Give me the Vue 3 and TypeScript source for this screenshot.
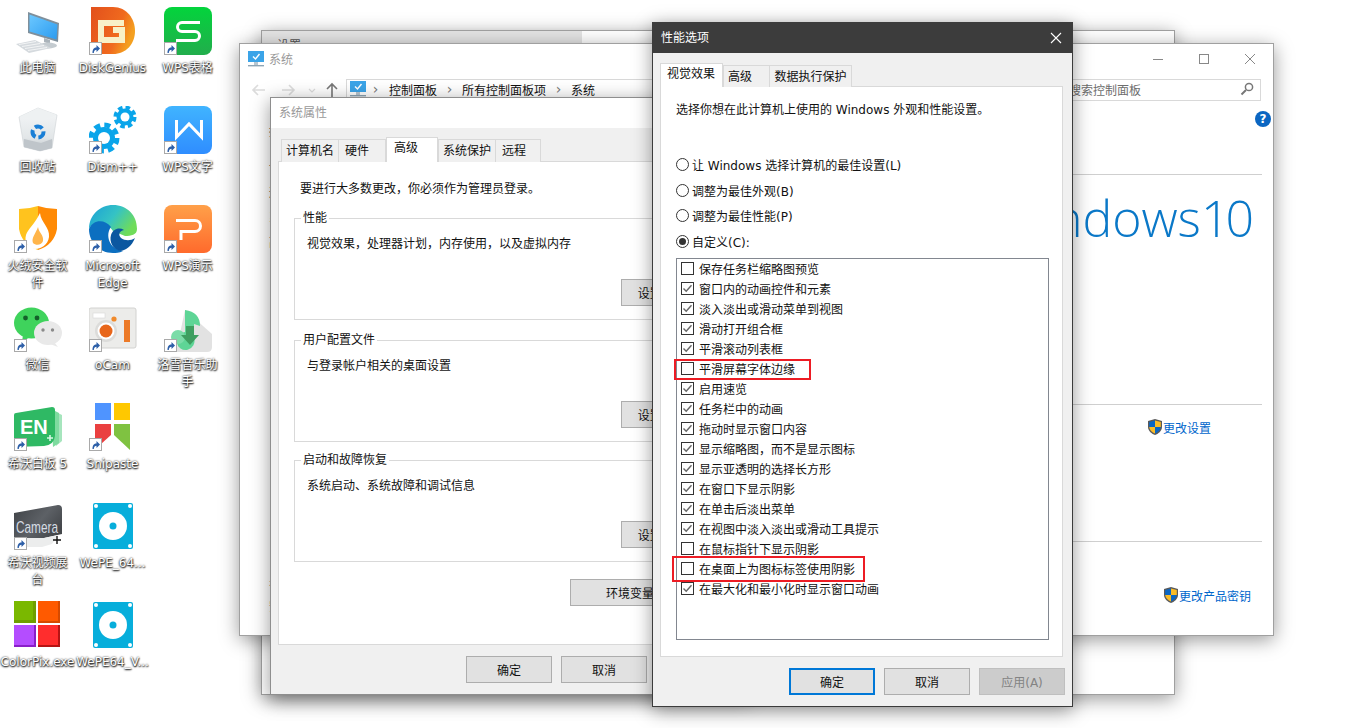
<script setup lang="ts">
interface DeskItem {
  label: string
  icon: string
  shortcut: boolean
}

// 桌面图标，按列从上到下排
const desktopItems: DeskItem[] = [
  { label: '此电脑', icon: 'pc', shortcut: false },
  { label: '回收站', icon: 'bin', shortcut: false },
  { label: '火绒安全软\n件', icon: 'huorong', shortcut: true },
  { label: '微信', icon: 'wechat', shortcut: true },
  { label: '希沃白板 5', icon: 'en', shortcut: true },
  { label: '希沃视频展\n台', icon: 'camera', shortcut: true },
  { label: 'ColorPix.exe', icon: 'colorpix', shortcut: false },
  { label: 'DiskGenius', icon: 'disk', shortcut: true },
  { label: 'Dism++', icon: 'dism', shortcut: true },
  { label: 'Microsoft\nEdge', icon: 'edge', shortcut: true },
  { label: 'oCam', icon: 'ocam', shortcut: true },
  { label: 'Snipaste', icon: 'snipaste', shortcut: true },
  { label: 'WePE_64...', icon: 'wepe', shortcut: false },
  { label: 'WePE64_V...', icon: 'wepe', shortcut: false },
  { label: 'WPS表格', icon: 'wpsS', shortcut: true },
  { label: 'WPS文字', icon: 'wpsW', shortcut: true },
  { label: 'WPS演示', icon: 'wpsP', shortcut: true },
  { label: '洛雪音乐助\n手', icon: 'lx', shortcut: true }
]

const radios = [
  { label: '让 Windows 选择计算机的最佳设置(L)', on: false },
  { label: '调整为最佳外观(B)', on: false },
  { label: '调整为最佳性能(P)', on: false },
  { label: '自定义(C):', on: true }
]

const effects = [
  { label: '保存任务栏缩略图预览', on: false },
  { label: '窗口内的动画控件和元素', on: true },
  { label: '淡入淡出或滑动菜单到视图', on: true },
  { label: '滑动打开组合框', on: true },
  { label: '平滑滚动列表框', on: true },
  { label: '平滑屏幕字体边缘', on: false },
  { label: '启用速览', on: true },
  { label: '任务栏中的动画', on: true },
  { label: '拖动时显示窗口内容', on: true },
  { label: '显示缩略图，而不是显示图标', on: true },
  { label: '显示亚透明的选择长方形', on: true },
  { label: '在窗口下显示阴影', on: true },
  { label: '在单击后淡出菜单', on: true },
  { label: '在视图中淡入淡出或滑动工具提示', on: true },
  { label: '在鼠标指针下显示阴影', on: false },
  { label: '在桌面上为图标标签使用阴影', on: false },
  { label: '在最大化和最小化时显示窗口动画', on: true }
]

const propTabs = ['计算机名', '硬件', '高级', '系统保护', '远程']
const perfTabs = ['视觉效果', '高级', '数据执行保护']

const groups = [
  { title: '性能', desc: '视觉效果，处理器计划，内存使用，以及虚拟内存' },
  { title: '用户配置文件', desc: '与登录帐户相关的桌面设置' },
  { title: '启动和故障恢复', desc: '系统启动、系统故障和调试信息' }
]
</script>

<template>
  <div class="screen">
    <!-- 桌面图标 -->
    <div class="desktop">
      <div v-for="(item, i) in desktopItems" :key="i" class="desk-item">
        <div class="desk-icon">
          <svg viewBox="0 0 48 48" width="48" height="48">
            <template v-if="item.icon === 'pc'">
              <defs>
                <linearGradient id="pcScreen" x1="0" y1="0" x2="1" y2="1">
                  <stop offset="0" stop-color="#6cc8ff" />
                  <stop offset="1" stop-color="#2b9bef" />
                </linearGradient>
              </defs>
              <polygon points="14,5 45,16 44,35 14,26" fill="#7f8f9b" />
              <polygon points="15.5,7.5 43.5,17.5 42.5,32.5 15.5,24.5" fill="url(#pcScreen)" />
              <polygon points="30,31 36,33 36,37 30,35" fill="#aab3ba" />
              <ellipse cx="34" cy="38.5" rx="9" ry="3" fill="#c4cbd0" />
              <polygon points="2,37 21,33 37,41 15,46" fill="#d5dade" />
              <path d="M5 37.5 L22 34.5 M8 39.5 L26 36.5 M11 41.5 L30 38.5 M14 43.5 L33 40.5" stroke="#f5f6f7" stroke-width="0.9" />
            </template>

            <template v-else-if="item.icon === 'bin'">
              <defs>
                <linearGradient id="binBody" x1="0" y1="0" x2="0" y2="1">
                  <stop offset="0" stop-color="#f5f7f8" />
                  <stop offset="0.7" stop-color="#e2e6e8" />
                  <stop offset="1" stop-color="#b9c0c5" />
                </linearGradient>
              </defs>
              <polygon points="5,11 24,2 43,9 38,42 26,45 10,41" fill="url(#binBody)" stroke="#cdd2d5" stroke-width="0.6" />
              <polygon points="5,11 24,2 43,9 27,15" fill="#eef1f2" />
              <polygon points="10,33 27,37 38,33 38,42 26,45 10,41" fill="#bfc5ca" />
              <circle cx="24" cy="26" r="5.5" fill="none" stroke="#1a7fd6" stroke-width="4" stroke-dasharray="8 3" />
            </template>

            <template v-else-if="item.icon === 'huorong'">
              <path d="M5 4 Q15 4 24 1 V45 Q8 40 5 24 Z" fill="#ffc31e" />
              <path d="M43 4 Q33 4 24 1 V45 Q40 40 43 24 Z" fill="#ff8a05" />
              <path d="M26 8 C27 18 36 22 35 32 C34 40 27 44 21 44 C14 43 10 37 12 30 C14 24 20 20 26 8 Z" fill="#fff" />
              <path d="M24 22 C25 28 30 30 29 36 C28 40 22 41 19 38 C17 33 22 28 24 22 Z" fill="#ffb54a" />
            </template>

            <template v-else-if="item.icon === 'wechat'">
              <ellipse cx="17.5" cy="19" rx="17.5" ry="15.5" fill="#3fd35c" />
              <path d="M9 31 L8 38 L16 33 Z" fill="#3fd35c" />
              <circle cx="11.5" cy="14" r="2.4" fill="#14602a" />
              <circle cx="23" cy="14" r="2.4" fill="#14602a" />
              <ellipse cx="34" cy="29" rx="14" ry="12" fill="#e9e9e9" />
              <path d="M40 38 L44 43 L36 40 Z" fill="#e9e9e9" />
              <circle cx="29" cy="26" r="1.7" fill="#8a8a8a" />
              <circle cx="38.5" cy="26" r="1.7" fill="#8a8a8a" />
            </template>

            <template v-else-if="item.icon === 'en'">
              <path d="M40 8 L48 12 V38 L42 43 Z" fill="#a6e5bd" />
              <path d="M37 6 L45 10 V40 L39 44 Z" fill="#7edb9f" />
              <path d="M0 12 Q0 10 2 10 L38 4 Q41 4 41 7 V33 Q40 42 30 43 L0 44 Z" fill="#2fb964" />
              <text x="6" y="31" class="en-text">EN</text>
              <path d="M33 35 h6 M36 32 v6" stroke="#d9f5e3" stroke-width="1.6" />
            </template>

            <template v-else-if="item.icon === 'camera'">
              <defs>
                <linearGradient id="camBg" x1="0" y1="0" x2="1" y2="0.6">
                  <stop offset="0" stop-color="#3f4246" />
                  <stop offset="0.6" stop-color="#5d6166" />
                  <stop offset="1" stop-color="#44474b" />
                </linearGradient>
              </defs>
              <path d="M0 11 L44 3 Q48 3 48 7 V32 L30 36 H12 L0 38 Z" fill="url(#camBg)" />
              <path d="M12 36 H30 L44 33 L38 42 L28 45 H0 V38 Z" fill="#eceded" />
              <text x="2" y="31" class="cam-text" textLength="42" lengthAdjust="spacingAndGlyphs">Camera</text>
              <path d="M39 38 h8 M43 34 v8" stroke="#111" stroke-width="1.4" />
            </template>

            <template v-else-if="item.icon === 'colorpix'">
              <rect x="0" y="0" width="22" height="22" fill="#6f9f00" />
              <rect x="0" y="0" width="19" height="19" fill="#7ab800" />
              <rect x="24" y="0" width="22" height="22" fill="#d64a00" />
              <rect x="24" y="0" width="20" height="20" fill="#ff5a00" />
              <rect x="0" y="24" width="22" height="22" fill="#8a1fc8" />
              <rect x="0" y="24" width="20" height="20" fill="#b44dff" />
              <rect x="24" y="24" width="22" height="22" fill="#b51414" />
              <rect x="24" y="24" width="20" height="20" fill="#ff2d2d" />
            </template>

            <template v-else-if="item.icon === 'disk'">
              <defs>
                <linearGradient id="diskBg" x1="0" y1="0" x2="1" y2="0.4">
                  <stop offset="0" stop-color="#e2501c" />
                  <stop offset="0.7" stop-color="#f06a1e" />
                  <stop offset="1" stop-color="#f4a020" />
                </linearGradient>
              </defs>
              <path d="M2 0 H24 C38 0 46 12 46 24 C46 37 37 47 24 47 H2 Z" fill="url(#diskBg)" />
              <path d="M35 16 H12 V33 H33 V23 H24" fill="none" stroke="#f8f1c8" stroke-width="6" />
            </template>

            <template v-else-if="item.icon === 'dism'">
              <circle cx="15" cy="32" r="11" fill="#0aa5ea" />
              <circle cx="15" cy="32" r="13" fill="none" stroke="#0aa5ea" stroke-width="5" stroke-dasharray="6 4.2" />
              <circle cx="15" cy="32" r="6" fill="#fff" />
              <circle cx="36" cy="11" r="8.5" fill="#0aa5ea" />
              <circle cx="36" cy="11" r="9.5" fill="none" stroke="#0aa5ea" stroke-width="4" stroke-dasharray="4.5 3" />
              <circle cx="36" cy="11" r="4.5" fill="#fff" />
            </template>

            <template v-else-if="item.icon === 'edge'">
              <defs>
                <linearGradient id="edgeTop" x1="0" y1="0" x2="1" y2="0.5">
                  <stop offset="0" stop-color="#1a9fd8" />
                  <stop offset="0.55" stop-color="#35c3c4" />
                  <stop offset="1" stop-color="#6fdc5a" />
                </linearGradient>
              </defs>
              <path d="M0 24 C0 10 11 0 24 0 C38 0 48 10 48 24 C48 30 42 31 36 31 L24 26 C16 14 4 16 0 24 Z" fill="url(#edgeTop)" />
              <path d="M0 24 C4 14 16 14 22 22 C16 30 20 44 34 46 C30 48 27 48 24 48 C10 48 0 37 0 24 Z" fill="#0c6fc0" />
              <path d="M22 30 C24 24 30 22 35 25 C30 26 29 30 32 33 C36 36 42 36 46 33 C43 41 36 46 31 46 C24 44 20 37 22 30 Z" fill="#0b57a0" />
            </template>

            <template v-else-if="item.icon === 'ocam'">
              <rect x="0" y="4" width="47" height="40" rx="2" fill="#ececea" stroke="#d2d2d0" />
              <rect x="4" y="9" width="12" height="5" fill="#fff" stroke="#d8d8d8" stroke-width="0.6" />
              <circle cx="17" cy="27" r="11" fill="#dcdcda" />
              <circle cx="17" cy="27" r="8.5" fill="#fff" />
              <circle cx="17" cy="27" r="6.5" fill="#e8661a" />
              <circle cx="25" cy="15" r="2.6" fill="#f08a2c" />
              <rect x="35" y="16" width="6" height="22" fill="#ec7a28" />
            </template>

            <template v-else-if="item.icon === 'snipaste'">
              <rect x="6" y="0" width="16" height="17" fill="#4f94ff" />
              <rect x="25" y="0" width="16" height="17" fill="#ffc800" />
              <polygon points="6,21 22,21 22,32 12,41 6,41" fill="#ea4040" />
              <polygon points="25,21 41,21 41,47 25,32" fill="#7fc241" />
            </template>

            <template v-else-if="item.icon === 'wepe'">
              <rect x="4" y="1" width="40" height="46" rx="2" fill="#07aedb" />
              <circle cx="24" cy="24" r="14" fill="#fff" />
              <circle cx="24" cy="24" r="3.5" fill="#07aedb" />
              <circle cx="7" cy="4" r="2" fill="#fff" />
              <circle cx="41" cy="4" r="2" fill="#fff" />
              <circle cx="7" cy="44" r="2" fill="#fff" />
              <circle cx="41" cy="44" r="2" fill="#fff" />
            </template>

            <template v-else-if="item.icon === 'wpsS'">
              <defs>
                <linearGradient id="wpsG" x1="0" y1="0" x2="0" y2="1">
                  <stop offset="0" stop-color="#03d43c" />
                  <stop offset="1" stop-color="#22ad4c" />
                </linearGradient>
              </defs>
              <rect width="48" height="48" rx="8" fill="url(#wpsG)" />
              <path d="M36 15.5 H18 a4.5 4.5 0 0 0 0 9 H31 a4.5 4.5 0 0 1 0 9 H12" fill="none" stroke="#fff" stroke-width="3" />
            </template>

            <template v-else-if="item.icon === 'wpsW'">
              <defs>
                <linearGradient id="wpsB" x1="0" y1="0" x2="0" y2="1">
                  <stop offset="0" stop-color="#40b4ff" />
                  <stop offset="1" stop-color="#2f8dff" />
                </linearGradient>
              </defs>
              <rect width="48" height="48" rx="8" fill="url(#wpsB)" />
              <path d="M12.5 14 V31 L25 18 L37.5 31 V14" fill="none" stroke="#fff" stroke-width="3" />
            </template>

            <template v-else-if="item.icon === 'wpsP'">
              <defs>
                <linearGradient id="wpsO" x1="0" y1="0" x2="0" y2="1">
                  <stop offset="0" stop-color="#ffa049" />
                  <stop offset="1" stop-color="#ff6a2c" />
                </linearGradient>
              </defs>
              <rect width="48" height="48" rx="8" fill="url(#wpsO)" />
              <path d="M12 15.5 H31 a5.5 5.5 0 0 1 0 11 H17 V35" fill="none" stroke="#fff" stroke-width="3" />
            </template>

            <template v-else-if="item.icon === 'lx'">
              <path d="M21 6 L48 30 V43 Q48 48 43 48 H12 Z" fill="#e2e2e2" />
              <path d="M21 6 Q36 8 36 22 L30 20 V34 A9 9 0 1 1 21 28 Z" fill="#5ed596" />
              <circle cx="14" cy="33" r="7" fill="#7bdca8" />
              <path d="M22 22 H30 V31 H35 L26 41 L17 31 H22 Z" fill="#3e9e60" />
            </template>
          </svg>
          <svg v-if="item.shortcut" class="link-badge" viewBox="0 0 13 13" width="13" height="13">
            <rect x="0.5" y="0.5" width="12" height="12" fill="#fff" stroke="#a9a9a9" />
            <path d="M3.5 11 C3.5 7 5 5.5 7.5 5.5 V3 L11 6.5 L7.5 10 V7.8 C6 7.8 5 8.8 4.8 11 Z" fill="#2d5fa8" />
          </svg>
        </div>
        <div class="desk-label">{{ item.label }}</div>
      </div>
    </div>

    <!-- 最底层：设置窗口，只露出一点标题栏 -->
    <div class="win win-back">
      <div class="back-title">
        <div class="back-title-left">设置</div>
      </div>
    </div>

    <!-- 系统窗口 -->
    <div class="win win-system">
      <div class="sys-title">
        <svg class="sys-icon" viewBox="0 0 16 16" width="16" height="16">
          <rect x="0" y="0" width="16" height="11" fill="#3ba4e8" />
          <path d="M5 5.5 L7.5 8 L11.5 3" fill="none" stroke="#fff" stroke-width="1.4" />
          <rect x="0" y="14" width="16" height="1.4" fill="#8fa5b5" />
          <rect x="6" y="11" width="4" height="3" fill="#b8c6d0" />
        </svg>
        <span class="sys-name">系统</span>
        <div class="win-btns">
          <span class="win-btn">
            <svg viewBox="0 0 12 12" width="12" height="12"><path d="M1 6.5 H11" stroke="#888" /></svg>
          </span>
          <span class="win-btn">
            <svg viewBox="0 0 12 12" width="12" height="12"><rect x="1.5" y="1.5" width="9" height="9" fill="none" stroke="#888" /></svg>
          </span>
          <span class="win-btn">
            <svg viewBox="0 0 12 12" width="12" height="12"><path d="M1 1 L11 11 M11 1 L1 11" stroke="#888" /></svg>
          </span>
        </div>
      </div>

      <div class="sys-nav">
        <svg class="nav-arrows" viewBox="0 0 96 22" width="96" height="22">
          <path d="M3 11 H15 M8 6 L3 11 L8 16" fill="none" stroke="#dcdcdc" stroke-width="1.6" />
          <path d="M32 11 H44 M39 6 L44 11 L39 16" fill="none" stroke="#dcdcdc" stroke-width="1.6" />
          <path d="M59 10 L62 13 L65 10" fill="none" stroke="#dcdcdc" stroke-width="1.2" />
          <path d="M82 18 V5 M77 10 L82 5 L87 10" fill="none" stroke="#777" stroke-width="1.6" />
        </svg>
        <div class="address">
          <svg viewBox="0 0 16 16" width="16" height="16">
            <rect x="0" y="0" width="16" height="11" fill="#3ba4e8" />
            <path d="M5 5.5 L7.5 8 L11.5 3" fill="none" stroke="#fff" stroke-width="1.4" />
            <rect x="6" y="11" width="4" height="3" fill="#b8c6d0" />
            <rect x="0" y="14" width="16" height="1.4" fill="#8fa5b5" />
          </svg>
          <span class="chev first">›</span>
          <span>控制面板</span>
          <span class="chev">›</span>
          <span>所有控制面板项</span>
          <span class="chev">›</span>
          <span>系统</span>
        </div>
        <div class="search">
          <span>搜索控制面板</span>
          <svg viewBox="0 0 14 14" width="14" height="14">
            <circle cx="9" cy="5" r="3.6" fill="none" stroke="#777" stroke-width="1.5" />
            <path d="M6 8 L1.5 12.5" stroke="#777" stroke-width="2" />
          </svg>
        </div>
      </div>

      <div class="sys-body">
        <div class="side">
          <div class="side-home">控制面板主页</div>
          <div class="side-links">
            <span>设备管理器</span>
            <span>远程设置</span>
            <span>系统保护</span>
            <span>高级系统设置</span>
          </div>
          <div class="side-see">
            <span>另请参阅</span>
            <span>安全和维护</span>
          </div>
        </div>
        <div class="sys-main">
          <div class="sys-head">
            <span class="help">?</span>
          </div>
          <div class="sys-logo">
            <span class="logo-text">Windows <span class="logo-num">10</span></span>
          </div>
          <div class="sys-sec">
            <div class="sec-link pad-a">
              <svg class="shield" viewBox="0 0 14 16" width="14" height="16">
                <path d="M7 0 L14 2 V8 C14 12 10 15 7 16 C4 15 0 12 0 8 V2 Z" fill="#5a5a5a" />
                <path d="M7 1.5 V8 H1.2 V3 Z" fill="#0a66c4" />
                <path d="M7 1.5 L12.8 3 V8 H7 Z" fill="#fbbc26" />
                <path d="M1.2 8 H7 V14.6 C4 13.6 1.6 11 1.2 8 Z" fill="#fbbc26" />
                <path d="M12.8 8 H7 V14.6 C10 13.6 12.4 11 12.8 8 Z" fill="#0a66c4" />
              </svg>
              <span>更改设置</span>
            </div>
          </div>
          <div class="sys-sec last">
            <div class="sec-link pad-b">
              <svg class="shield" viewBox="0 0 14 16" width="14" height="16">
                <path d="M7 0 L14 2 V8 C14 12 10 15 7 16 C4 15 0 12 0 8 V2 Z" fill="#5a5a5a" />
                <path d="M7 1.5 V8 H1.2 V3 Z" fill="#0a66c4" />
                <path d="M7 1.5 L12.8 3 V8 H7 Z" fill="#fbbc26" />
                <path d="M1.2 8 H7 V14.6 C4 13.6 1.6 11 1.2 8 Z" fill="#fbbc26" />
                <path d="M12.8 8 H7 V14.6 C10 13.6 12.4 11 12.8 8 Z" fill="#0a66c4" />
              </svg>
              <span>更改产品密钥</span>
            </div>
          </div>
        </div>
      </div>
    </div>

    <!-- 系统属性对话框 -->
    <div class="win win-props">
      <div class="props-title">系统属性</div>
      <div class="props-body">
        <div class="tabs props-tabs">
          <span
            v-for="tab in propTabs"
            :key="tab"
            class="tab"
            :class="{ active: tab === '高级' }"
          >{{ tab }}</span>
        </div>
        <div class="props-panel">
          <p class="props-note">要进行大多数更改，你必须作为管理员登录。</p>
          <fieldset v-for="g in groups" :key="g.title" class="group">
            <legend>{{ g.title }}</legend>
            <div class="group-desc">{{ g.desc }}</div>
            <button class="btn group-btn">设置(S)...</button>
          </fieldset>
          <button class="btn env-btn">环境变量(N)...</button>
        </div>
        <div class="dlg-foot">
          <button class="btn">确定</button>
          <button class="btn">取消</button>
          <button class="btn">应用(A)</button>
        </div>
      </div>
    </div>

    <!-- 性能选项对话框 -->
    <div class="win win-perf">
      <div class="perf-title">
        <span>性能选项</span>
        <svg viewBox="0 0 12 12" width="12" height="12">
          <path d="M1 1 L11 11 M11 1 L1 11" stroke="#fff" stroke-width="1.1" />
        </svg>
      </div>
      <div class="perf-body">
        <div class="tabs">
          <span
            v-for="tab in perfTabs"
            :key="tab"
            class="tab"
            :class="{ active: tab === '视觉效果' }"
          >{{ tab }}</span>
        </div>
        <div class="perf-panel">
          <p class="perf-note">选择你想在此计算机上使用的 Windows 外观和性能设置。</p>
          <div class="radios">
            <div v-for="r in radios" :key="r.label" class="radio-row">
              <span class="radio" :class="{ on: r.on }"></span>
              <span>{{ r.label }}</span>
            </div>
          </div>
          <div class="effects">
            <div v-for="e in effects" :key="e.label" class="effect-row">
              <span class="check">
                <svg v-if="e.on" viewBox="0 0 13 13" width="13" height="13">
                  <path d="M2.5 6.5 L5.2 9.2 L10.5 3.2" fill="none" stroke="#666" stroke-width="1.4" />
                </svg>
              </span>
              <span>{{ e.label }}</span>
            </div>
          </div>
        </div>
        <div class="dlg-foot perf-foot">
          <button class="btn primary">确定</button>
          <button class="btn">取消</button>
          <button class="btn disabled">应用(A)</button>
        </div>
      </div>
      <!-- 红框标注 -->
      <div class="mark mark-a"></div>
      <div class="mark mark-b"></div>
    </div>
  </div>
</template>

<style>
html,
body {
  margin: 0;
  background: #fff;
}
</style>

<style scoped>
.screen {
  position: relative;
  width: 1366px;
  height: 728px;
  overflow: hidden;
  background: #fff;
  font-family: "DejaVu Sans", "Noto Sans CJK SC", sans-serif;
  font-size: 12px;
  color: #111;
}

/* desktop */
.desktop {
  display: grid;
  grid-template-columns: repeat(3, 75px);
  grid-template-rows: repeat(7, 99px);
  grid-auto-flow: column;
  padding-top: 7px;
}

.desk-item {
  display: flex;
  flex-direction: column;
  align-items: center;
}

.desk-icon {
  position: relative;
  width: 48px;
  height: 48px;
}

.desk-icon > svg:first-child {
  display: block;
}

.link-badge {
  position: absolute;
  left: 0;
  bottom: 0;
}

.en-text {
  font-family: "Liberation Sans", sans-serif;
  font-weight: 700;
  font-size: 20px;
  fill: #fff;
}

.cam-text {
  font-family: "Liberation Sans", sans-serif;
  font-size: 17px;
  fill: #d5dbe3;
}

.desk-label {
  margin-top: 5px;
  width: 75px;
  white-space: pre-line;
  text-align: center;
  line-height: 17px;
  color: #fff;
  text-shadow: 0 1px 2px rgba(0, 0, 0, 0.9), 0 0 2px rgba(0, 0, 0, 0.8), 1px 1px 1px rgba(0, 0, 0, 0.4);
}

/* windows */
.win {
  position: absolute;
  box-sizing: border-box;
  background: #fff;
  box-shadow: 0 4px 18px rgba(0, 0, 0, 0.4);
}

.win-back {
  left: 261px;
  top: 30px;
  width: 914px;
  height: 665px;
  border: 1px solid #a0a0a0;
}

.back-title {
  height: 30px;
}

.back-title-left {
  width: 320px;
  height: 30px;
  padding-left: 15px;
  line-height: 30px;
  box-sizing: border-box;
  background: #e4e4e4;
  color: #555;
}

.win-system {
  left: 239px;
  top: 43px;
  width: 1035px;
  height: 593px;
  border: 1px solid #a0a0a0;
  display: flex;
  flex-direction: column;
}

.sys-title {
  display: flex;
  align-items: center;
  height: 29px;
  padding-left: 8px;
}

.sys-icon {
  margin-right: 5px;
}

.sys-name {
  color: #999;
}

.win-btns {
  display: flex;
  margin-left: auto;
}

.win-btn {
  display: flex;
  align-items: center;
  justify-content: center;
  width: 46px;
  height: 29px;
}

.sys-nav {
  display: flex;
  height: 22px;
  margin-top: 6px;
  padding: 0 12px 0 10px;
}

.address {
  flex: 1;
  display: flex;
  align-items: center;
  box-sizing: border-box;
  border: 1px solid #d9d9d9;
  padding: 0 0 2px 3px;
}

.chev {
  width: 9px;
  margin: 0 8px;
  text-align: center;
  color: #777;
  font-size: 14px;
  line-height: 18px;
}

.chev.first {
  margin: 0 9px 0 5px;
}

.search {
  display: flex;
  align-items: center;
  justify-content: space-between;
  box-sizing: border-box;
  width: 197px;
  border: 1px solid #d9d9d9;
  padding: 0 6px 2px 4px;
  color: #6d6d6d;
}

.sys-body {
  flex: 1;
  display: flex;
}

.side {
  display: flex;
  flex-direction: column;
  width: 400px;
  padding: 22px 0 19px 29px;
  box-sizing: border-box;
  line-height: 18px;
}

.side-links,
.side-see {
  display: flex;
  flex-direction: column;
  gap: 7px;
}

.side-links {
  margin-top: 18px;
}

.side-see {
  margin-top: auto;
  gap: 8px;
}

.sys-main {
  flex: 1;
  display: flex;
  flex-direction: column;
  padding-right: 11px;
}

.sys-head {
  display: flex;
  justify-content: flex-end;
  box-sizing: border-box;
  height: 74px;
  padding-top: 10px;
  border-bottom: 1px solid #cfcfcf;
}

.help {
  width: 16px;
  height: 16px;
  margin-right: -9px;
  border-radius: 50%;
  background: #0b66c2;
  color: #fff;
  font-weight: 700;
  font-size: 12px;
  line-height: 16px;
  text-align: center;
}

.sys-logo {
  display: flex;
  justify-content: flex-end;
  box-sizing: border-box;
  height: 230px;
  padding: 8px 12px 0 0;
  border-bottom: 1px solid #cfcfcf;
}

.logo-text {
  font-family: "Open Sans", sans-serif;
  font-weight: 300;
  font-size: 50px;
  line-height: 70px;
  color: #0a78c8;
  white-space: nowrap;
  word-spacing: -13px;
}

.logo-num {
  letter-spacing: -4px;
}

.sys-sec {
  box-sizing: border-box;
  height: 137px;
  padding-top: 13px;
  border-bottom: 1px solid #cfcfcf;
}

.sys-sec.last {
  flex: 1;
  padding-top: 44px;
  border-bottom: 0;
}

.sec-link {
  display: flex;
  align-items: center;
  justify-content: flex-end;
  height: 18px;
  color: #0066cc;
}

.pad-a {
  padding-right: 51px;
}

.pad-b {
  padding-right: 11px;
}

.shield {
  margin-right: 1px;
}

/* shared tabs */
.tabs {
  display: flex;
  align-items: flex-end;
  height: 24px;
  position: relative;
  z-index: 1;
}

.tab {
  box-sizing: border-box;
  height: 22px;
  padding: 0 4px;
  min-width: 46px;
  border: 1px solid #d9d9d9;
  border-bottom: 0;
  background: #f0f0f0;
  line-height: 22px;
  margin-left: -1px;
}

.tab.active {
  height: 24px;
  padding: 0 6px;
  background: #fff;
  line-height: 20px;
  margin-left: 0;
}

.tab:first-child {
  margin-left: 0;
}

.btn {
  box-sizing: border-box;
  width: 86px;
  height: 27px;
  padding: 0;
  border: 1px solid #adadad;
  background: #e1e1e1;
  color: #111;
  font: inherit;
}

.dlg-foot {
  display: flex;
  justify-content: flex-end;
  gap: 9px;
  margin-top: 11px;
}

/* 系统属性 */
.win-props {
  left: 270px;
  top: 97px;
  width: 480px;
  height: 598px;
  border: 1px solid #8e8e8e;
  background: #f0f0f0;
}

.props-title {
  height: 30px;
  padding-left: 8px;
  background: #fff;
  line-height: 31px;
  color: #999;
}

.props-body {
  padding: 9px 7px 0;
}

.props-tabs {
  height: 25px;
  padding-left: 3px;
}

.props-tabs .tab {
  height: 23px;
  line-height: 22px;
  padding: 0 4px;
}

.props-tabs .tab:nth-child(2) {
  width: 48px;
  padding-left: 6px;
}

.props-tabs .tab.active {
  width: 52px;
  height: 25px;
  padding: 0 7px;
  line-height: 21px;
}

.props-tabs .tab:nth-child(4) {
  margin-left: 0;
  width: 58px;
}

.props-tabs .tab:nth-child(5) {
  padding-left: 6px;
}

.props-panel {
  display: flex;
  flex-direction: column;
  box-sizing: border-box;
  height: 484px;
  margin-top: -1px;
  border: 1px solid #d9d9d9;
  background: #fff;
}

.props-note {
  margin: 18px 0 11px 21px;
  line-height: 18px;
}

.group {
  box-sizing: border-box;
  height: 111px;
  margin: 0 11px 11px 15px;
  padding: 8px 22px 0 12px;
  border: 1px solid #d9d9d9;
  min-width: 0;
}

.group legend {
  margin-left: -6px;
  padding: 0 2px;
  line-height: 18px;
}

.group-desc {
  line-height: 18px;
}

.group-btn {
  display: block;
  margin: 26px 0 0 auto;
}

.group:nth-of-type(3) {
  margin-top: -2px;
  margin-bottom: 0;
}

.env-btn {
  align-self: flex-end;
  width: 150px;
  margin: 17px 21px 0 0;
}

/* 性能选项 */
.win-perf {
  left: 652px;
  top: 22px;
  width: 421px;
  height: 685px;
  border: 1px solid #3c3c3c;
  background: #f0f0f0;
}

.perf-title {
  display: flex;
  align-items: center;
  justify-content: space-between;
  height: 30px;
  padding: 0 10px 0 8px;
  background: #3c3c3c;
  color: #fff;
  line-height: 28px;
}

.perf-body {
  padding: 10px 7px 0;
}

.perf-body .tabs .tab:nth-child(2) {
  width: 47px;
  margin-left: 0;
}

.perf-body .tabs .tab:nth-child(3) {
  width: 83px;
  text-align: center;
}

.perf-body .tabs .tab.active {
  width: 63px;
}

.perf-panel {
  box-sizing: border-box;
  height: 571px;
  margin: -1px 2px 0 0;
  padding: 0 13px 0 15px;
  border: 1px solid #d9d9d9;
  background: #fff;
}

.perf-note {
  margin: 0;
  padding-top: 14px;
  line-height: 18px;
}

.radios {
  margin-top: 33px;
}

.radio-row {
  display: flex;
  align-items: center;
  gap: 3px;
  height: 25.5px;
}

.radio {
  box-sizing: border-box;
  display: flex;
  align-items: center;
  justify-content: center;
  width: 13px;
  height: 13px;
  border: 1px solid #333;
  border-radius: 50%;
}

.radio.on::after {
  content: '';
  width: 7px;
  height: 7px;
  border-radius: 50%;
  background: #333;
}

.effects {
  box-sizing: border-box;
  height: 382px;
  margin-top: 3.5px;
  border: 1px solid #828790;
}

.effect-row {
  display: flex;
  align-items: center;
  gap: 5px;
  height: 20px;
  padding-left: 4px;
}

.check {
  box-sizing: border-box;
  display: block;
  width: 13px;
  height: 13px;
  border: 1px solid #333;
}

.check svg {
  display: block;
  margin: -1px;
}

.perf-foot .primary {
  border: 2px solid #0078d7;
}

.perf-foot .disabled {
  border-color: #bfbfbf;
  background: #ccc;
  color: #838383;
}

.mark {
  position: absolute;
  box-sizing: border-box;
  border: 2px solid #ed1c24;
}

.mark-a {
  left: 21px;
  top: 336px;
  width: 137px;
  height: 21px;
}

.mark-b {
  left: 19px;
  top: 533px;
  width: 193px;
  height: 26px;
}
</style>
